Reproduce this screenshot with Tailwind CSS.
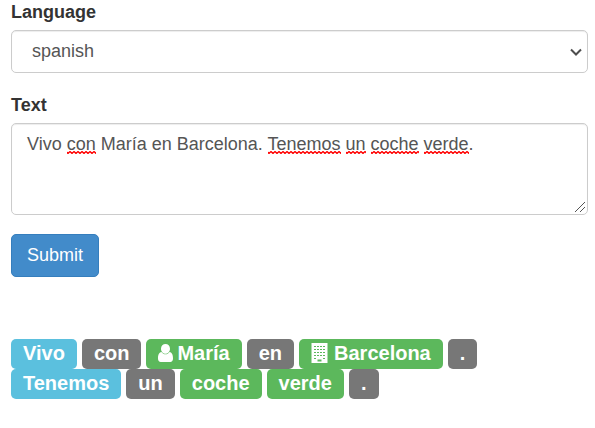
<!DOCTYPE html>
<html lang="en">
<head>
<meta charset="utf-8">
<meta name="viewport" content="width=device-width, initial-scale=1">
<title>Text analysis</title>
<script src="https://cdn.jsdelivr.net/npm/@tailwindcss/browser@4"></script>
</head>
<body class="bg-white font-['Liberation_Sans',Arial,sans-serif] text-lg/[25px] text-[#333]">
<main class="pl-[11px] pr-[7px]">
  <form onsubmit="return false">
    <div class="mb-5">
      <label for="language" class="mb-1.5 block leading-6 font-bold">Language</label>
      <div class="grid items-center">
        <select id="language" class="col-start-1 row-start-1 h-[43px] w-full appearance-none rounded-[5px] border border-[#ccc] bg-white px-5 text-[#555] shadow-[inset_0_1px_1px_rgba(0,0,0,0.075)]">
          <option selected>spanish</option>
          <option>english</option>
        </select>
        <svg class="pointer-events-none col-start-1 row-start-1 mr-1.5 h-3 w-3 justify-self-end" viewBox="0 0 12 12" fill="none" stroke="#4d4d4d" stroke-width="2" aria-hidden="true"><path d="M1 3.5 6 8.5 11 3.5"/></svg>
      </div>
    </div>
    <div class="mb-[19px]">
      <label for="text" class="mb-1.5 block leading-6 font-bold">Text</label>
      <div class="grid items-end">
        <textarea id="text" spellcheck="false" class="col-start-1 row-start-1 block h-[92px] w-full resize-none rounded-[5px] border border-[#ccc] bg-white px-[15px] py-2 text-[#555] shadow-[inset_0_1px_1px_rgba(0,0,0,0.075)]">Vivo con María en Barcelona. Tenemos un coche verde.</textarea>
        <!-- Spelling marks laid over the text box -->
        <div aria-hidden="true" class="pointer-events-none col-start-1 row-start-1 self-start border border-transparent px-[15px] py-2 text-transparent [&_u]:bg-[url('data:image/svg+xml,%3Csvg%20xmlns=%22http://www.w3.org/2000/svg%22%20width=%224%22%20height=%223%22%3E%3Cpath%20d=%22M-1%200.500L1%202.500L3%200.500L5%202.500%22%20fill=%22none%22%20stroke=%22red%22%20stroke-width=%221.300%22/%3E%3C/svg%3E')] [&_u]:bg-bottom-left [&_u]:bg-repeat-x [&_u]:no-underline">Vivo <u>con</u> María en Barcelona. <u>Tenemos</u> <u>un</u> <u>coche</u> <u>verde</u>.</div>
        <svg class="pointer-events-none col-start-1 row-start-1 mr-[2px] mb-[2px] h-3 w-3 justify-self-end" viewBox="0 0 12 12" fill="none" stroke="#555" stroke-width="1" aria-hidden="true"><path d="M1 11 11 1M6 11 11 6"/></svg>
      </div>
    </div>
    <button type="submit" class="block h-[43px] rounded-[5px] border border-[#357ebd] bg-[#428bca] px-[15px] text-white">Submit</button>
  </form>

  <section class="mt-[62px] text-xl/[30px] font-bold text-white *:flex *:flex-wrap *:gap-x-[5px] [&_span]:rounded-[5px] [&_span]:px-3 [&_span]:pb-[2px] [&_span]:leading-7">
    <p>
      <span class="bg-[#5bc0de]">Vivo</span>
      <span class="bg-[#777]">con</span>
      <span class="flex items-center gap-1 bg-[#5cb85c]"><svg class="h-[18px] w-[15px]" viewBox="0 0 15 18" fill="currentColor" aria-hidden="true"><path d="M7.500 0C10 0 12 2 12 4.700S10 9.700 7.500 9.700 3 7.400 3 4.700 5 0 7.500 0ZM3.500 8C4.600 9.600 6 10.300 7.500 10.300S10.400 9.600 11.500 8C14.300 8.300 15 11.500 15 14.500 15 16.800 13.900 18 12.300 18H2.700C1.100 18 0 16.800 0 14.500 0 11.500 .700 8.300 3.500 8Z"/></svg>María</span>
      <span class="bg-[#777]">en</span>
      <span class="flex items-center gap-1.5 bg-[#5cb85c]"><svg class="h-5 w-[17px]" viewBox="0 0 17 20" aria-hidden="true"><path fill="currentColor" d="M.5 0h16v20H.5Z"/><path stroke="#5cb85c" stroke-width="1" stroke-dasharray="2 1" d="M3 3.500h11M3 6.500h11M3 9.500h11M3 12.500h11M3 15.500h2M12 15.500h2"/><path fill="#5cb85c" d="M6.500 16.500h4v2h-4Z"/></svg>Barcelona</span>
      <span class="bg-[#777]">.</span>
    </p>
    <p>
      <span class="bg-[#5bc0de]">Tenemos</span>
      <span class="bg-[#777]">un</span>
      <span class="bg-[#5cb85c]">coche</span>
      <span class="bg-[#5cb85c]">verde</span>
      <span class="bg-[#777]">.</span>
    </p>
  </section>
</main>
</body>
</html>
